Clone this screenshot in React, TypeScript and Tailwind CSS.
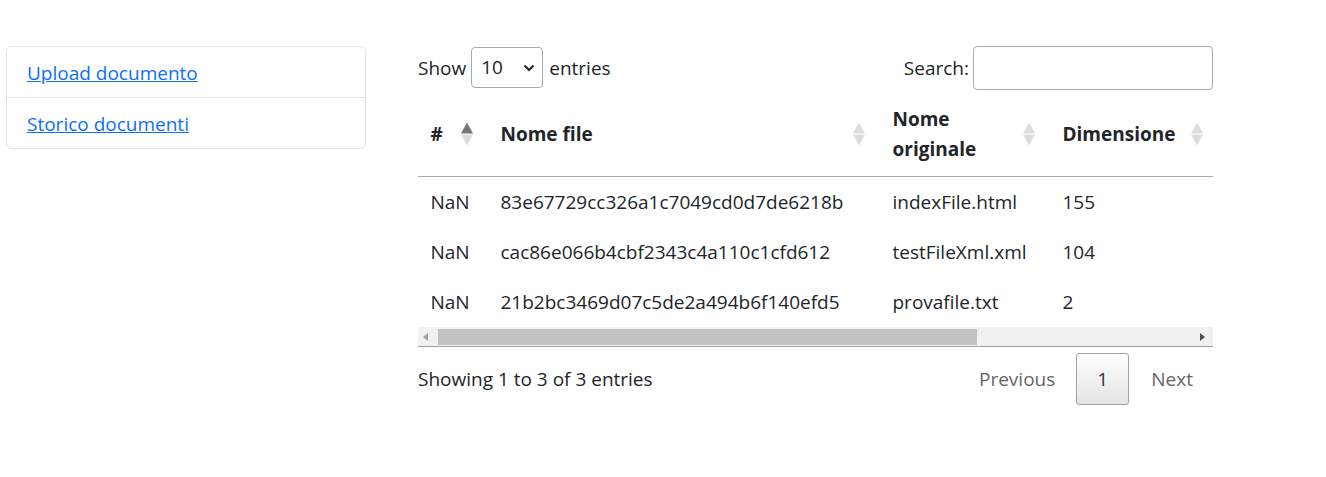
import React from "react";

const rows = [
  { id: "NaN", file: "83e67729cc326a1c7049cd0d7de6218b", orig: "indexFile.html", size: "155" },
  { id: "NaN", file: "cac86e066b4cbf2343c4a110c1cfd612", orig: "testFileXml.xml", size: "104" },
  { id: "NaN", file: "21b2bc3469d07c5de2a494b6f140efd5", orig: "provafile.txt", size: "2" },
];

function SortIcon({ active }: { active?: boolean }) {
  return (
    <svg
      width="12"
      height="23"
      viewBox="0 0 12 23"
      className="absolute right-[15px] top-1/2 -translate-y-1/2"
    >
      <polygon points="6,0 12,11 0,11" fill={active ? "#777777" : "#dddddd"} />
      <polygon points="0,12 12,12 6,23" fill="#dddddd" />
    </svg>
  );
}

function Th({ children, w, active }: { children: React.ReactNode; w: string; active?: boolean }) {
  return (
    <th className={`relative ${w} pl-[12.5px] pr-[34px] py-[12px] text-left align-middle font-bold`}>
      {children}
      <SortIcon active={active} />
    </th>
  );
}

export default function App() {
  return (
    <div className="min-h-screen bg-white font-['Open_Sans',sans-serif] text-[19px] leading-[30px] text-[#212529]">
      <div className="flex pt-[46px]">
        <div className="ml-[6px] w-[360px] self-start rounded-[6px] border border-[#dee2e6]">
          <div className="px-[20px] pb-[9px] pt-[11px]">
            <a href="#" className="text-[#0d6efd] underline">
              Upload documento
            </a>
          </div>
          <div className="border-t border-[#dee2e6] px-[20px] pb-[9px] pt-[11px]">
            <a href="#" className="text-[#0d6efd] underline">
              Storico documenti
            </a>
          </div>
        </div>

        <div className="ml-[52px] w-[795px]">
          <div className="flex h-[44px] items-center justify-between">
            <div className="flex items-center">
              <span>Show</span>
              <div className="relative ml-[5px] mr-[6px] mt-[-2px] flex h-[41px] w-[72px] items-center rounded-[4px] border border-[#a8a8a8] pl-[9px]">
                <span>10</span>
                <svg width="12" height="8" viewBox="0 0 12 8" className="absolute right-[7px] top-[16px]">
                  <path d="M1.5 1.5 L6 6 L10.5 1.5" fill="none" stroke="#222" strokeWidth="2" />
                </svg>
              </div>
              <span>entries</span>
            </div>
            <div className="flex items-center">
              <span className="mr-[4px]">Search:</span>
              <input className="h-[44px] w-[240px] rounded-[4px] border border-[#aaaaaa] px-2 outline-none" />
            </div>
          </div>

          <div className="mt-[2px] overflow-hidden">
            <table className="w-[800px] table-fixed border-collapse">
              <thead>
                <tr className="border-b border-[#aaaaaa]">
                  <Th w="w-[70px]" active>
                    #
                  </Th>
                  <Th w="w-[392px]">Nome file</Th>
                  <Th w="w-[170px]">Nome originale</Th>
                  <Th w="w-[168px]">Dimensione</Th>
                </tr>
              </thead>
              <tbody>
                {rows.map((r) => (
                  <tr key={r.file}>
                    <td className="px-[12.5px] py-[10px]">{r.id}</td>
                    <td className="px-[12.5px] py-[10px]">{r.file}</td>
                    <td className="px-[12.5px] py-[10px]">{r.orig}</td>
                    <td className="px-[12.5px] py-[10px]">{r.size}</td>
                  </tr>
                ))}
              </tbody>
            </table>
          </div>

          <div className="flex h-[20px] items-center border-b border-[#a0a0a0] bg-[#f1f1f1]">
            <div className="flex w-[14px] justify-center">
              <svg width="5" height="8" viewBox="0 0 5 8">
                <polygon points="5,0 5,8 0,4" fill="#a3a3a3" />
              </svg>
            </div>
            <div className="ml-[6px] h-[16px] w-[539px] bg-[#c1c1c1]" />
            <div className="flex-1" />
            <div className="flex w-[22px] justify-center">
              <svg width="5" height="8" viewBox="0 0 5 8">
                <polygon points="0,0 0,8 5,4" fill="#505050" />
              </svg>
            </div>
          </div>

          <div className="flex items-center justify-between pt-[6px]">
            <span>Showing 1 to 3 of 3 entries</span>
            <div className="flex items-center">
              <span className="px-[20px] py-[10px] text-[#666666]">Previous</span>
              <span className="ml-[1px] flex h-[52px] w-[53px] items-center justify-center rounded-[3px] border border-[#a3a3a3] bg-gradient-to-b from-white to-[#e4e4e4] text-[#333333]">
                1
              </span>
              <span className="ml-[2px] px-[20px] py-[10px] text-[#666666]">Next</span>
            </div>
          </div>
        </div>
      </div>
    </div>
  );
}
